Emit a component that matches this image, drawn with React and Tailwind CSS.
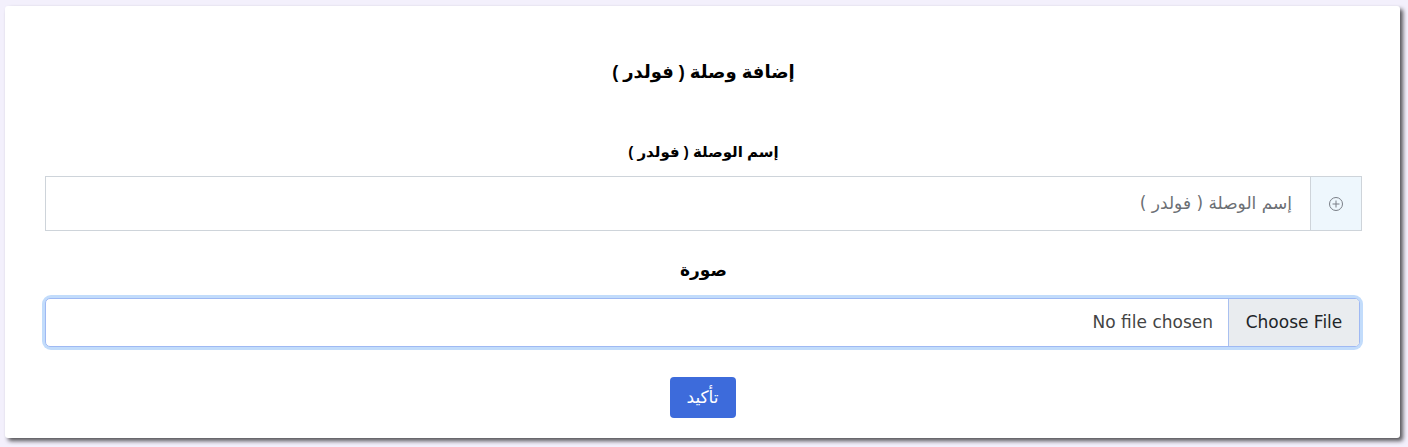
import React from "react";

function PlusCircle() {
  return (
    <svg width="16" height="16" viewBox="0 0 16 16" fill="none" stroke="#7a7f87" strokeWidth="1">
      <circle cx="8" cy="8" r="6.5" />
      <path d="M8 4.5v7M4.5 8h7" />
    </svg>
  );
}

export default function App() {
  return (
    <div className="min-h-[447px] bg-[#f3f0fc] pt-[6px] pl-[5px] pr-[8px] pb-[9px]">
      <div
        dir="rtl"
        className="bg-white rounded-[3px] shadow-[3px_3px_4px_rgba(0,0,0,0.65)] pr-[38px] pl-[40px] pt-[52px] pb-[20px] h-[432px]"
        style={{ fontFamily: '"Liberation Sans", "DejaVu Sans", sans-serif' }}
      >
        <h1 className="text-center text-[18px] font-bold text-black leading-[28px]">
          إضافة وصلة ( فولدر )
        </h1>

        <div className="mt-[55px] text-center text-[15px] font-bold text-black leading-[22px]">
          إسم الوصلة ( فولدر )
        </div>

        <div className="mt-[13px] flex h-[55px] border border-[#ced4da]">
          <div className="w-[51px] shrink-0 flex items-center justify-center bg-[#eef7fd] border-l border-[#ced4da]">
            <PlusCircle />
          </div>
          <div
            className="flex-1 flex items-center pr-[18px] text-[17px] text-[#6c6f74]"
            style={{ fontFamily: '"DejaVu Sans", sans-serif' }}
          >
            إسم الوصلة ( فولدر )
          </div>
        </div>

        <div className="mt-[26px] text-center text-[17px] font-bold text-black leading-[28px]">
          صورة
        </div>

        <div className="mt-[13px] ml-[0px] mr-[2px] rounded-[6px] ring-[3px] ring-[#c2dcfb]">
          <div
            className="flex h-[49px] border border-[#9fb9f3] rounded-[5px] overflow-hidden"
            style={{ fontFamily: '"DejaVu Sans", sans-serif' }}
          >
            <div className="w-[131px] shrink-0 flex items-center justify-center bg-[#e9ecef] border-l border-[#a9c0f0] text-[17px] text-[#212529]">
              Choose File
            </div>
            <div dir="ltr" className="flex-1 flex items-center justify-end pr-[15px] text-[17px] text-[#444]">
              No file chosen
            </div>
          </div>
        </div>

        <div className="mt-[30px] flex justify-center">
          <button className="w-[66px] h-[41px] rounded-[4px] bg-[#3d6bdb] text-white text-[17px] -translate-x-[1px]">
            تأكيد
          </button>
        </div>
      </div>
    </div>
  );
}
